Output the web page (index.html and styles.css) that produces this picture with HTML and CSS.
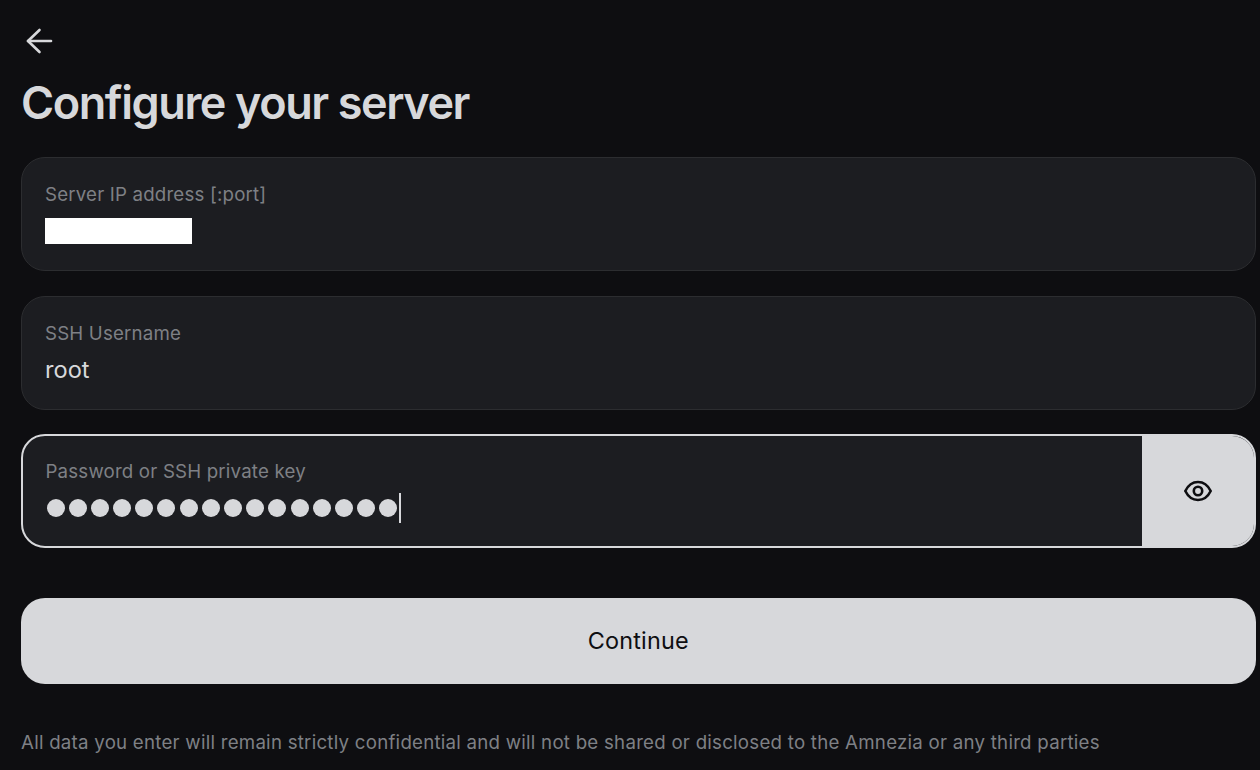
FILE: index.html
```html
<!DOCTYPE html>
<html lang="en">
<head>
<meta charset="utf-8">
<title>Configure your server</title>
<link rel="stylesheet" href="styles.css">
</head>
<body>
<main class="page">
  <button class="back" aria-label="Back">
    <svg width="30" height="30" viewBox="0 0 30 30" fill="none" stroke="#d7d8db" stroke-width="2.6" stroke-linecap="round" stroke-linejoin="round"><path d="M27 15H4"/><path d="M15.500 4 4 15 15.500 26"/></svg>
  </button>
  <h1 class="title">Configure your server</h1>
  <div class="fields">
    <div class="field">
      <div class="field-body">
        <div class="label">Server IP address [:port]</div>
        <div class="value"><span class="redact"></span></div>
      </div>
    </div>
    <div class="field">
      <div class="field-body">
        <div class="label">SSH Username</div>
        <div class="value">root</div>
      </div>
    </div>
    <div class="field field-active">
      <div class="field-body">
        <div class="label">Password or SSH private key</div>
        <div class="value dots">
          <i></i><i></i><i></i><i></i><i></i><i></i><i></i><i></i><i></i><i></i><i></i><i></i><i></i><i></i><i></i><i></i><span class="caret"></span>
        </div>
      </div>
      <div class="eye">
        <svg width="30" height="30" viewBox="0 0 30 30" fill="none" stroke="#0e0e11" stroke-width="2.600" stroke-linejoin="round"><path d="M2.300 15C5.500 8.500 10 6 15 6S24.500 8.500 27.700 15C24.500 21.500 20 24 15 24S5.500 21.500 2.300 15Z"/><circle cx="15" cy="15" r="4.200"/></svg>
      </div>
    </div>
  </div>
  <button class="continue">Continue</button>
  <p class="note">All data you enter will remain strictly confidential and will not be shared or disclosed to the Amnezia or any third parties</p>
</main>
</body>
</html>
```
FILE: styles.css
```css
* { box-sizing: border-box; }
html, body { margin: 0; height: 100%; overflow: hidden; background: #0e0e11; }
body { font-family: "Inter", "Liberation Sans", sans-serif; }
.page { width: 1260px; height: 770px; padding: 26px 4px 0 21px; display: flex; flex-direction: column; }
.back { width: 36px; height: 30px; padding: 0; border: 0; background: none; display: flex; align-items: center; }
.back svg { display: block; margin-left: 3px; }
.title { margin: 17px 0 0; font-size: 45px; line-height: 60px; font-weight: 600; letter-spacing: -1.420px; color: #d7d8db; height: 71px; }
.fields { display: flex; flex-direction: column; gap: 25px; margin-top: 13px; width: 1235px; }
.field { height: 114px; border: 1.500px solid #2c2d30; border-radius: 24px; background: #1c1d21; display: flex; overflow: hidden; }
.field-active { border: 2px solid #d7d8db; margin-top: -1px; }
.field-body { flex: 1; padding: 24px 23px 0; }
.field-active .field-body { padding-left: 22.500px; padding-top: 22.500px; }
.label { font-size: 18.700px; line-height: 26px; color: #7e8085; letter-spacing: 0.180px; }
.value { margin-top: 9px; height: 28px; font-size: 23.600px; line-height: 28px; color: #d7d8db; display: flex; align-items: center; }
.redact { width: 147px; height: 26px; background: #fff; margin-top: 0; }
.dots { gap: 4.200px; padding-left: 1px; }
.dots i { width: 18px; height: 18px; border-radius: 50%; background: #d7d8db; flex: none; }
.caret { width: 2px; height: 30px; background: #d7d8db; margin-left: -3px; }
.eye { width: 112.500px; flex: none; padding-left: 1px; background: #d7d8db; display: flex; align-items: center; justify-content: center; }
.continue { margin: 50px 0 0 -0.500px; height: 86px; width: 1235.500px; border: 0; padding: 0 0 2px; border-radius: 24px; background: #d7d8db; color: #0e0e11; font-family: inherit; font-size: 23.400px; font-weight: 400; letter-spacing: 0.200px; }
.note { margin: 46px 0 0; font-size: 18.700px; line-height: 26px; color: #7e8085; letter-spacing: 0.240px; white-space: nowrap; }
```
